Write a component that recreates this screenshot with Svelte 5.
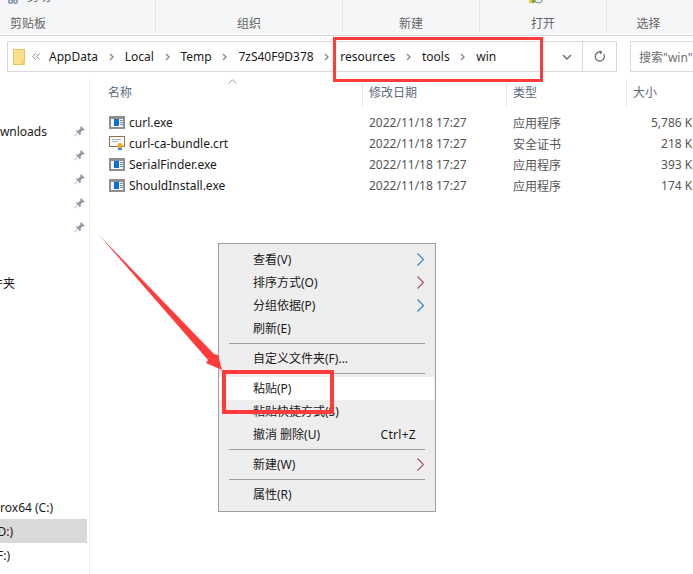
<script>
  const groups = [
    { label: "剪贴板", width: 156 },
    { label: "组织", width: 187 },
    { label: "新建", width: 137 },
    { label: "打开", width: 127 },
    { label: "选择", width: 83 }
  ];

  const crumbs = ["AppData", "Local", "Temp", "7zS40F9D378", "resources", "tools", "win"];

  const files = [
    { name: "curl.exe", type: "应用程序", size: "5,786 KB", kind: "exe" },
    { name: "curl-ca-bundle.crt", type: "安全证书", size: "218 KB", kind: "crt" },
    { name: "SerialFinder.exe", type: "应用程序", size: "393 KB", kind: "exe" },
    { name: "ShouldInstall.exe", type: "应用程序", size: "174 KB", kind: "exe" }
  ];

  const pins = [1, 2, 3, 4];
</script>

<div class="explorer">
  <div class="ribbon">
    {#each groups as group, i}
      <div class="group" style="width: {group.width}px">
        {#if i === 0}
          <div class="cut">
            <svg width="10" height="10" viewBox="0 0 10 10"><path d="M2.500 0L5 4 7.500 0" fill="none" stroke="#6d87a8" stroke-width="1.200" /><circle cx="2.500" cy="6.500" r="1.800" fill="none" stroke="#6d87a8" stroke-width="1.300" /><circle cx="7.500" cy="6.500" r="1.800" fill="none" stroke="#6d87a8" stroke-width="1.300" /></svg>
            <span>剪切</span>
          </div>
        {/if}
        {#if i === 2}
          <span class="cut-new">新建项目</span>
        {/if}
        {#if i === 3}
          <div class="cut-open">
            <svg width="14" height="5" viewBox="0 0 14 5"><rect x="0" y="0" width="4" height="3" fill="#e8c53a" /><rect x="3" y="0" width="3" height="3" fill="#6fb03c" /><circle cx="9.500" cy="-1" r="4" fill="#eee" stroke="#888" /></svg>
            <span>轻松访问</span>
          </div>
        {/if}
        <span class="group-label">{group.label}</span>
      </div>
    {/each}
  </div>

  <div class="addressrow">
    <div class="address">
      <svg class="folder" width="13" height="16" viewBox="0 0 13 16">
        <rect x="0.5" y="0.5" width="11" height="15" fill="#fbe08c" stroke="#e6c35c" />
        <rect x="9" y="11" width="3" height="4.500" fill="#f5cf63" />
      </svg>
      <svg class="chev-double" width="8" height="7" viewBox="0 0 8 7"><path d="M3.500.5L.7 3.500l2.800 3M7.500.5L4.700 3.500l2.800 3" fill="none" stroke="#8a8a8a" /></svg>
      {#each crumbs as crumb, i}
        <span class="crumb">{crumb}</span>
        {#if i < crumbs.length - 1}
          <svg class="sep" width="5" height="8" viewBox="0 0 5 8"><path d="M1 1l3 3-3 3" fill="none" stroke="#8a8a8a" stroke-width="1.400" /></svg>
        {/if}
      {/each}
      <svg class="dropdown" width="10" height="6" viewBox="0 0 10 6"><path d="M1 1l4 4 4-4" fill="none" stroke="#707070" stroke-width="1.500" /></svg>
      <div class="refresh">
        <svg width="12" height="13" viewBox="0 0 12 13"><path d="M9.700 4a4.600 4.600 0 1 1-2.600-1.900" fill="none" stroke="#707070" stroke-width="1.300" /><path d="M5.600 0l3 2.200-2.600 2.400z" fill="#707070" /></svg>
      </div>
    </div>
    <div class="search">搜索"win"</div>
  </div>

  <div class="body">
    <nav class="sidebar">
      <div class="side-row">
        <span class="side-label downloads">Downloads</span>
        <svg class="pin" width="11" height="11" viewBox="0 0 11 11"><path d="M7 0l4 4-1 .6-1.200-.3L6.600 6.600 6.800 8.400 6 9.200 3.900 7.100.8 10.400.5 10.100 3.600 6.800 1.800 5l.8-.8 1.800.2L6.700 2l-.3-1.100z" fill="#8f99a6" /></svg>
      </div>
      {#each pins as p}
        <div class="side-row">
          <svg class="pin" width="11" height="11" viewBox="0 0 11 11"><path d="M7 0l4 4-1 .6-1.200-.3L6.600 6.600 6.800 8.400 6 9.200 3.900 7.100.8 10.400.5 10.100 3.600 6.800 1.800 5l.8-.8 1.800.2L6.700 2l-.3-1.100z" fill="#8f99a6" /></svg>
        </div>
      {/each}
      <div class="side-row folderrow">
        <span class="side-label fav">文件夹</span>
      </div>
      <div class="side-row drives">
        <span class="side-label drive-c">Prox64 (C:)</span>
      </div>
      <div class="side-row selected">
        <span class="side-label drive-d">本地磁盘 (D:)</span>
      </div>
      <div class="side-row">
        <span class="side-label drive-f">本地磁盘 (F:)</span>
      </div>
    </nav>

    <main class="list">
      <div class="headers">
        <span class="col-name">名称</span>
        <span class="col-date">修改日期</span>
        <span class="col-type">类型</span>
        <span class="col-size">大小</span>
        <svg class="sort" width="9" height="5" viewBox="0 0 9 5"><path d="M.7 4.500l3.800-3.800 3.800 3.800" fill="none" stroke="#9a9a9a" /></svg>
      </div>
      <div class="rows">
        {#each files as file}
          <div class="row">
            <span class="cell-name">
              {#if file.kind === "exe"}
                <svg class="file-icon" width="16" height="13" viewBox="0 0 16 13">
                  <rect x="0" y="0" width="16" height="13" fill="#8f8f8f" />
                  <rect x="2" y="3" width="12" height="8" fill="#f6f6f6" />
                  <rect x="5" y="3" width="5" height="7" fill="#0a6fd8" />
                  <rect x="11" y="4" width="3" height="1" fill="#7a8ea5" />
                  <rect x="11" y="6" width="3" height="1" fill="#7a8ea5" />
                  <rect x="11" y="8" width="3" height="1" fill="#7a8ea5" />
                </svg>
              {:else}
                <svg class="file-icon" width="16" height="15" viewBox="0 0 16 15">
                  <rect x="0.5" y="0.5" width="15" height="10" fill="#fbfaf4" stroke="#8d7550" />
                  <rect x="3" y="3" width="9" height="1" fill="#9db6d4" />
                  <rect x="3" y="5" width="6" height="1" fill="#9db6d4" />
                  <path d="M9.500 10l-.5 4.500 2-1 2 1-.5-4.500z" fill="#2d78c8" />
                  <circle cx="11" cy="9.500" r="2.600" fill="#eeab2a" />
                </svg>
              {/if}
              <span>{file.name}</span>
            </span>
            <span class="cell-date">2022/11/18 17:27</span>
            <span class="cell-type">{file.type}</span>
            <span class="cell-size">{file.size}</span>
          </div>
        {/each}
      </div>
    </main>
  </div>

  <div class="menu">
    <div class="item">查看(V)<svg class="arrow" width="7" height="13" viewBox="0 0 7 13"><path d="M.5.5l6 6-6 6" fill="none" stroke="#2f7fc4" stroke-width="1.200" /></svg></div>
    <div class="item">排序方式(O)<svg class="arrow" width="7" height="13" viewBox="0 0 7 13"><path d="M.5.5l6 6-6 6" fill="none" stroke="#a8505a" stroke-width="1.200" /></svg></div>
    <div class="item">分组依据(P)<svg class="arrow" width="7" height="13" viewBox="0 0 7 13"><path d="M.5.5l6 6-6 6" fill="none" stroke="#2f7fc4" stroke-width="1.200" /></svg></div>
    <div class="item">刷新(E)</div>
    <div class="divider"></div>
    <div class="item">自定义文件夹(F)...</div>
    <div class="divider"></div>
    <div class="item active">粘贴(P)</div>
    <div class="item">粘贴快捷方式(S)</div>
    <div class="item">撤消 删除(U)<span class="shortcut">Ctrl+Z</span></div>
    <div class="divider"></div>
    <div class="item">新建(W)<svg class="arrow" width="7" height="13" viewBox="0 0 7 13"><path d="M.5.5l6 6-6 6" fill="none" stroke="#a8505a" stroke-width="1.200" /></svg></div>
    <div class="divider"></div>
    <div class="item">属性(R)</div>
  </div>

  <div class="mark mark-path"></div>
  <div class="mark mark-paste"></div>
  <svg class="pointer" width="130" height="145" viewBox="0 0 130 145">
    <path d="M0 0L115 119L119 120L123 135L107 128L109 125z" fill="#ff3b3b" />
  </svg>
</div>

<style>
  :global(body) {
    background: #fff;
  }

  .explorer {
    position: relative;
    width: 693px;
    height: 574px;
    overflow: hidden;
    background: #fff;
    color: #1a1a1a;
    font-family: "Noto Sans", "Noto Sans CJK SC", sans-serif;
    font-size: 12px;
  }

  .ribbon {
    display: flex;
    height: 35px;
    background: #f5f6f7;
    border-bottom: 1px solid #dadbdc;
    box-sizing: content-box;
  }

  .group {
    position: relative;
    display: flex;
    flex-shrink: 0;
    justify-content: center;
    height: 32px;
    padding-top: 15px;
    box-sizing: border-box;
    border-right: 1px solid #e2e3e4;
    color: #666;
    line-height: 17px;
  }

  .group:first-child {
    justify-content: flex-start;
    padding-left: 10px;
  }

  .group:last-child {
    border-right: none;
  }

  .cut {
    position: absolute;
    top: -5px;
    left: 8px;
    display: flex;
    align-items: center;
    gap: 9px;
    line-height: 16px;
  }

  .cut span {
    margin-top: -7px;
  }

  .cut-new {
    position: absolute;
    top: -15px;
    left: 7px;
    line-height: 17px;
    color: #222;
  }

  .cut-open {
    position: absolute;
    top: 0;
    left: 49px;
    display: flex;
    align-items: flex-start;
    gap: 3px;
    color: #222;
  }

  .cut-open span {
    margin-top: -15px;
  }

  .addressrow {
    display: flex;
    align-items: stretch;
    height: 31px;
    margin-top: 5px;
    padding-left: 7px;
  }

  .address {
    display: flex;
    align-items: center;
    width: 610px;
    box-sizing: border-box;
    border: 1px solid #d9d9d9;
    padding-left: 5px;
    font-size: 12px;
  }

  .folder {
    margin-right: 6px;
  }

  .chev-double {
    margin-right: 9px;
  }

  .sep {
    margin: 0 11px 0 10.7px;
  }

  .dropdown {
    margin-left: auto;
    margin-right: 10px;
  }

  .refresh {
    display: flex;
    align-items: center;
    justify-content: center;
    width: 33px;
    height: 100%;
    border-left: 1px solid #d9d9d9;
  }

  .search {
    flex: 1;
    display: flex;
    align-items: center;
    margin-left: 13px;
    padding-left: 8px;
    border: 1px solid #d9d9d9;
    border-right: none;
    color: #6d6d6d;
    white-space: nowrap;
  }

  .body {
    display: grid;
    grid-template-columns: 90px 1fr;
    margin-top: 7px;
    height: 495px;
  }

  .sidebar {
    border-right: 1px solid #efefef;
    padding-top: 40px;
  }

  .side-row {
    display: flex;
    align-items: center;
    position: relative;
    width: 87px;
    height: 24px;
  }

  .side-label {
    white-space: nowrap;
    display: flex;
    justify-content: flex-end;
    flex-shrink: 0;
  }

  .downloads {
    width: 47px;
  }

  .fav {
    width: 15px;
  }

  .drive-c {
    width: 53px;
  }

  .drive-d {
    width: 13px;
  }

  .drive-f {
    width: 10px;
  }

  .pin {
    position: absolute;
    left: 74px;
    top: 7px;
  }

  .folderrow {
    margin-top: 32px;
  }

  .drives {
    margin-top: 200px;
  }

  .selected {
    background: #d9d9d9;
  }

  .list {
    min-width: 0;
  }

  .headers {
    position: relative;
    display: grid;
    grid-template-columns: 272px 144px 120px 1fr;
    height: 27px;
    color: #5b6b7d;
  }

  .headers span {
    padding-left: 6px;
    line-height: 27px;
    border-left: 1px solid #e5e5e5;
  }

  .headers .col-name {
    padding-left: 18px;
    border-left: none;
  }

  .sort {
    position: absolute;
    left: 138px;
    top: 0;
  }

  .rows {
    padding-top: 6px;
  }

  .row {
    display: grid;
    grid-template-columns: 272px 144px 120px 1fr;
    height: 21px;
    align-items: center;
    white-space: nowrap;
  }

  .cell-name {
    display: flex;
    align-items: center;
    padding-left: 19px;
  }

  .file-icon {
    flex-shrink: 0;
    width: 16px;
    margin-right: 4px;
  }

  .cell-date,
  .cell-type {
    padding-left: 7px;
    color: #555;
  }

  .cell-size {
    width: 74px;
    text-align: right;
    color: #555;
  }

  .menu {
    position: absolute;
    left: 218px;
    top: 243px;
    width: 218px;
    height: 269px;
    box-sizing: border-box;
    padding-top: 4px;
    background: #eeeeee;
    border: 1px solid #a0a0a0;
  }

  .item {
    position: relative;
    height: 23px;
    padding-left: 34px;
    line-height: 23px;
    white-space: nowrap;
  }

  .item.active {
    background: #fff;
    margin-right: 1px;
  }

  .arrow {
    position: absolute;
    right: 11px;
    top: 5px;
  }

  .shortcut {
    position: absolute;
    right: 19px;
    letter-spacing: 0.3px;
  }

  .divider {
    height: 1px;
    margin: 3px 10px 3px 10px;
    background: #a0a0a0;
  }

  .mark {
    position: absolute;
    box-sizing: border-box;
    border: 3px solid #ff3b3b;
  }

  .mark-path {
    left: 333px;
    top: 37px;
    width: 210px;
    height: 45px;
  }

  .mark-paste {
    left: 222px;
    top: 370px;
    width: 112px;
    height: 44px;
    border-width: 4px;
  }

  .pointer {
    position: absolute;
    left: 99px;
    top: 235px;
  }
</style>
